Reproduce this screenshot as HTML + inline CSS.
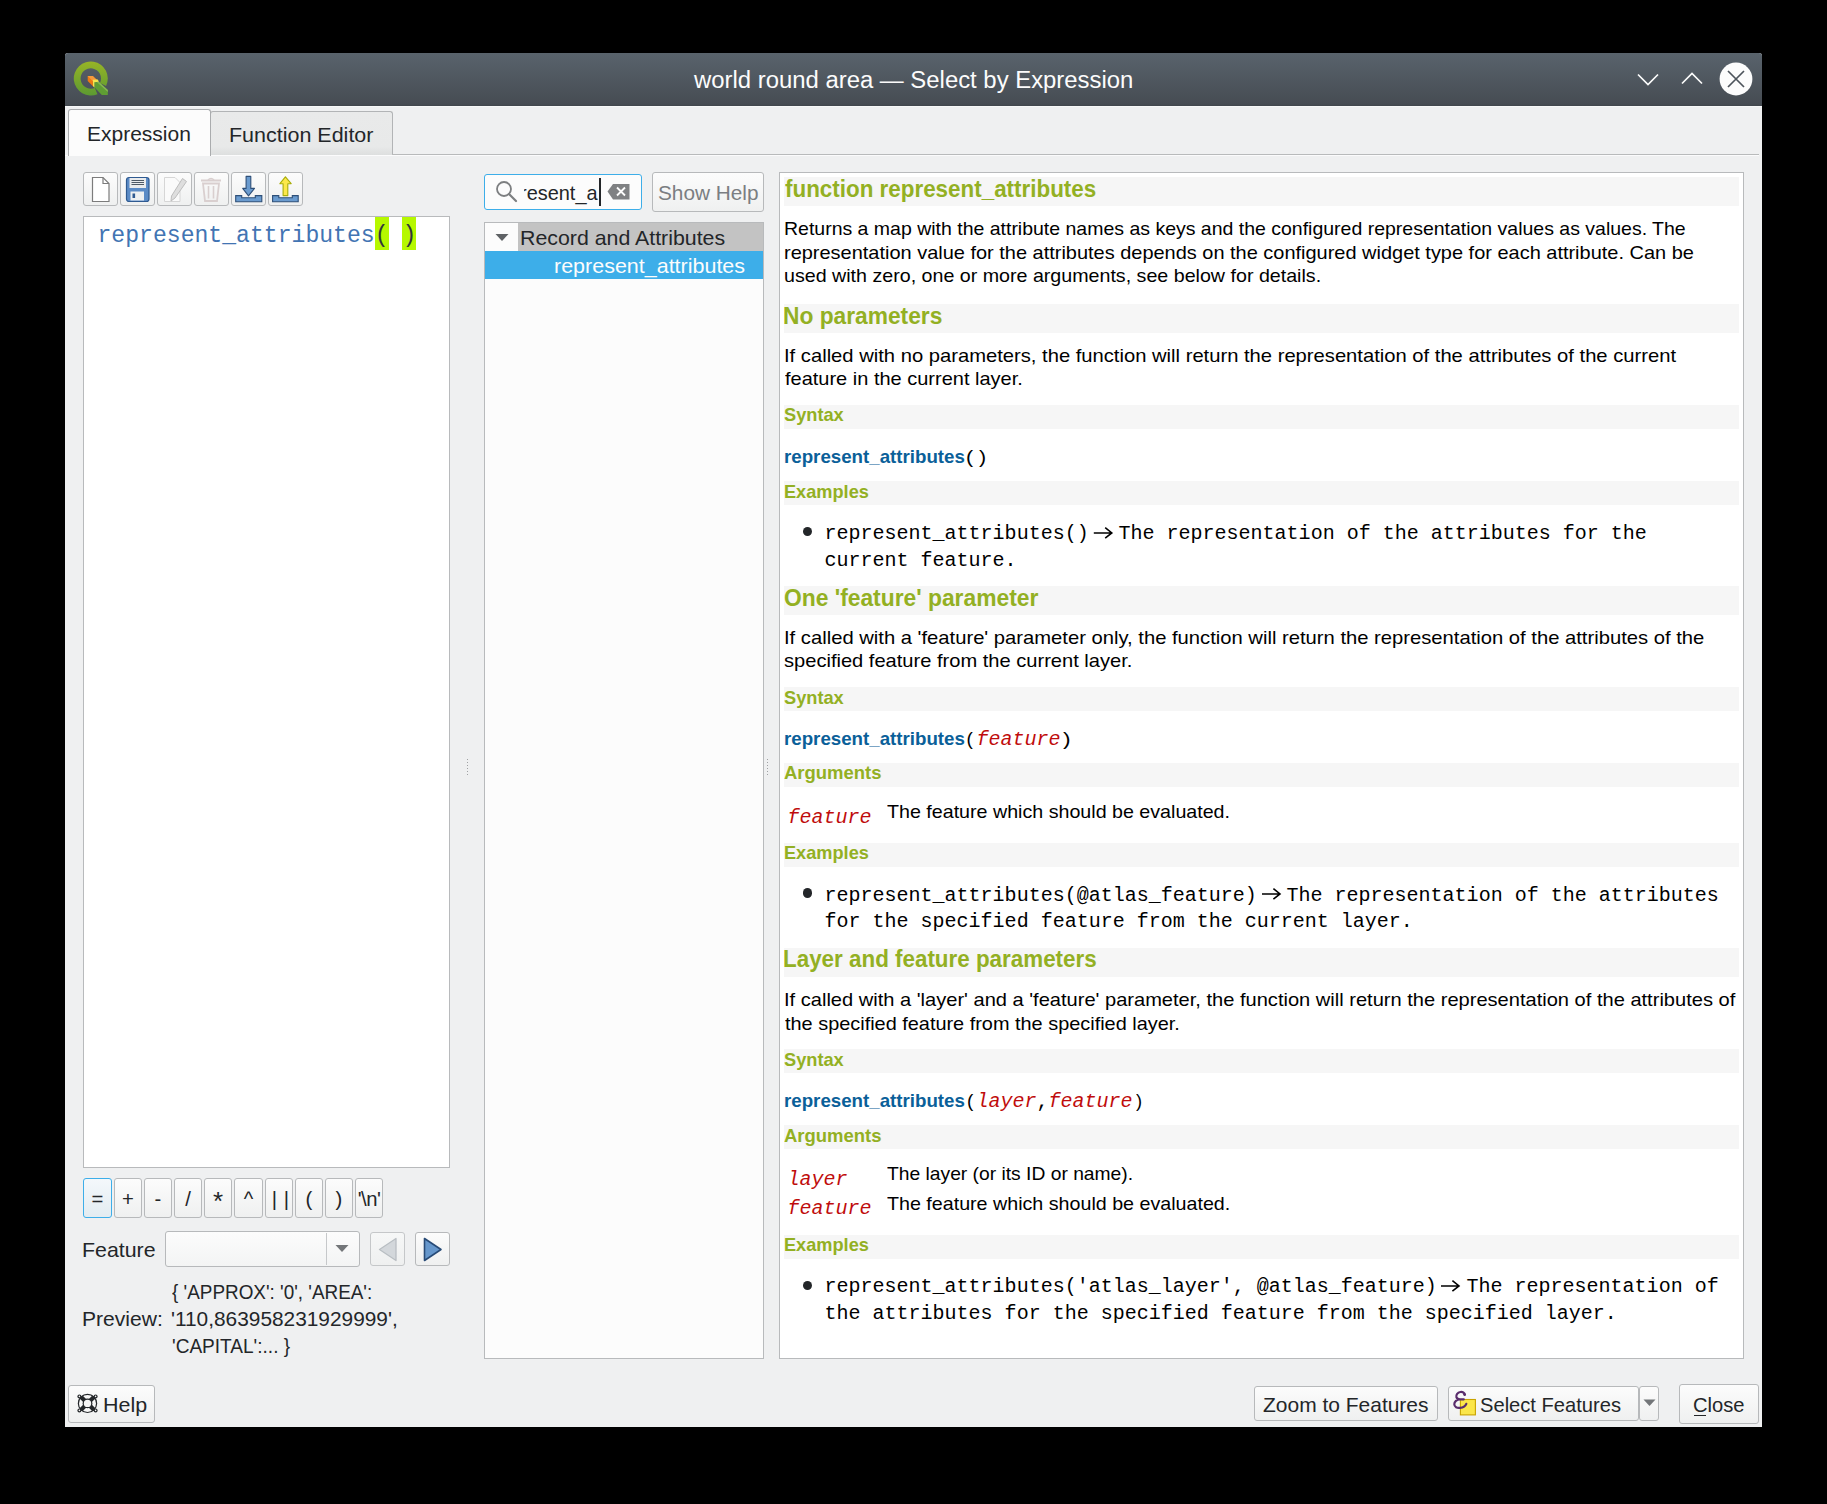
<!DOCTYPE html>
<html><head><meta charset="utf-8"><title>Select by Expression</title>
<style>
html,body{margin:0;padding:0;}
body{width:1827px;height:1504px;background:#000;position:relative;overflow:hidden;font-family:"Liberation Sans",sans-serif;}
.b{position:absolute;}
.t{position:absolute;white-space:nowrap;transform-origin:0 0;}
</style></head><body>
<div class="b" style="left:65px;top:53px;width:1697px;height:1374px;background:#eff0f1;border-radius:3px 3px 0 0;"></div>
<div class="b" style="left:65px;top:53px;width:1697px;height:53px;background:linear-gradient(#59636c,#464c53 96%,#40464c);border-radius:3px 3px 0 0;"></div>
<div class="b" style="left:65px;top:106px;width:1697px;height:1px;background:#f7f8f8;"></div>
<div class="b" style="left:210px;top:111px;width:183px;height:44px;background:linear-gradient(#e9eaea 0%,#e8e9e9 80%,#dddfdf 100%);border:1px solid #b2b4b6;border-bottom:none;border-radius:3px 3px 0 0;box-sizing:border-box;"></div>
<div class="b" style="left:392px;top:154px;width:1367px;height:1px;background:#b8babb;"></div>
<div class="b" style="left:65px;top:155px;width:1694px;height:1px;background:#fbfbfc;"></div>
<div class="b" style="left:68px;top:109px;width:143px;height:47px;background:#fcfcfc;border:1px solid #aaacae;border-bottom:none;border-radius:3px 3px 0 0;box-sizing:border-box;"></div>
<div class="b" style="left:83px;top:172px;width:35px;height:34px;border:1px solid #b7b9bb;border-radius:3px;background:linear-gradient(#fcfcfc,#eff0f0);box-sizing:border-box;"></div>
<div class="b" style="left:120px;top:172px;width:35px;height:34px;border:1px solid #b7b9bb;border-radius:3px;background:linear-gradient(#fcfcfc,#eff0f0);box-sizing:border-box;"></div>
<div class="b" style="left:157px;top:172px;width:35px;height:34px;border:1px solid #b7b9bb;border-radius:3px;background:linear-gradient(#fcfcfc,#eff0f0);box-sizing:border-box;"></div>
<div class="b" style="left:194px;top:172px;width:35px;height:34px;border:1px solid #b7b9bb;border-radius:3px;background:linear-gradient(#fcfcfc,#eff0f0);box-sizing:border-box;"></div>
<div class="b" style="left:231px;top:172px;width:35px;height:34px;border:1px solid #b7b9bb;border-radius:3px;background:linear-gradient(#fcfcfc,#eff0f0);box-sizing:border-box;"></div>
<div class="b" style="left:268px;top:172px;width:35px;height:34px;border:1px solid #b7b9bb;border-radius:3px;background:linear-gradient(#fcfcfc,#eff0f0);box-sizing:border-box;"></div>
<div class="b" style="left:83px;top:216px;width:367px;height:952px;background:#fff;border:1px solid #b8babc;box-sizing:border-box;"></div>
<div class="b" style="left:375px;top:217px;width:14px;height:33px;background:#b6f800;"></div>
<div class="b" style="left:402px;top:217px;width:14px;height:33px;background:#b6f800;"></div>
<div class="t" style="left:97.5px;top:225.2px;font-family:'Liberation Mono', monospace;font-size:23.1px;line-height:23.1px;color:#4274b3">represent_attributes<span style="color:#31363b">( )</span></div>
<div class="b" style="left:83px;top:1178px;width:29px;height:40px;border:1px solid #3daee9;border-radius:3px;background:linear-gradient(#f4f8fb,#e3ecf1);box-sizing:border-box;"></div>
<div class="t" style="left:83px;top:1189px;width:29px;text-align:center;font-family:'Liberation Sans', sans-serif;font-size:20.3px;line-height:20.3px;color:#232629;letter-spacing:0px;text-indent:0px">=</div>
<div class="b" style="left:114px;top:1178px;width:28px;height:40px;border:1px solid #b7b9bb;border-radius:3px;background:linear-gradient(#fcfcfc,#eff0f0);box-sizing:border-box;"></div>
<div class="t" style="left:114px;top:1189px;width:28px;text-align:center;font-family:'Liberation Sans', sans-serif;font-size:20.3px;line-height:20.3px;color:#232629;letter-spacing:0px;text-indent:0px">+</div>
<div class="b" style="left:144px;top:1178px;width:28px;height:40px;border:1px solid #b7b9bb;border-radius:3px;background:linear-gradient(#fcfcfc,#eff0f0);box-sizing:border-box;"></div>
<div class="t" style="left:144px;top:1189px;width:28px;text-align:center;font-family:'Liberation Sans', sans-serif;font-size:20.3px;line-height:20.3px;color:#232629;letter-spacing:0px;text-indent:0px">-</div>
<div class="b" style="left:174px;top:1178px;width:28px;height:40px;border:1px solid #b7b9bb;border-radius:3px;background:linear-gradient(#fcfcfc,#eff0f0);box-sizing:border-box;"></div>
<div class="t" style="left:174px;top:1189px;width:28px;text-align:center;font-family:'Liberation Sans', sans-serif;font-size:20.3px;line-height:20.3px;color:#232629;letter-spacing:0px;text-indent:0px">/</div>
<div class="b" style="left:204px;top:1178px;width:28px;height:40px;border:1px solid #b7b9bb;border-radius:3px;background:linear-gradient(#fcfcfc,#eff0f0);box-sizing:border-box;"></div>
<div class="t" style="left:204px;top:1191px;width:28px;text-align:center;font-family:'Liberation Sans', sans-serif;font-size:26px;line-height:20.3px;color:#232629;letter-spacing:0px;text-indent:0px">*</div>
<div class="b" style="left:234px;top:1178px;width:29px;height:40px;border:1px solid #b7b9bb;border-radius:3px;background:linear-gradient(#fcfcfc,#eff0f0);box-sizing:border-box;"></div>
<div class="t" style="left:234px;top:1189px;width:29px;text-align:center;font-family:'Liberation Sans', sans-serif;font-size:20.3px;line-height:20.3px;color:#232629;letter-spacing:0px;text-indent:0px">^</div>
<div class="b" style="left:265px;top:1178px;width:28px;height:40px;border:1px solid #b7b9bb;border-radius:3px;background:linear-gradient(#fcfcfc,#eff0f0);box-sizing:border-box;"></div>
<div class="t" style="left:265px;top:1189px;width:28px;text-align:center;font-family:'Liberation Sans', sans-serif;font-size:20.3px;line-height:20.3px;color:#232629;letter-spacing:6.7px;text-indent:6.7px">||</div>
<div class="b" style="left:295px;top:1178px;width:28px;height:40px;border:1px solid #b7b9bb;border-radius:3px;background:linear-gradient(#fcfcfc,#eff0f0);box-sizing:border-box;"></div>
<div class="t" style="left:295px;top:1189px;width:28px;text-align:center;font-family:'Liberation Sans', sans-serif;font-size:20.3px;line-height:20.3px;color:#232629;letter-spacing:0px;text-indent:0px">(</div>
<div class="b" style="left:325px;top:1178px;width:28px;height:40px;border:1px solid #b7b9bb;border-radius:3px;background:linear-gradient(#fcfcfc,#eff0f0);box-sizing:border-box;"></div>
<div class="t" style="left:325px;top:1189px;width:28px;text-align:center;font-family:'Liberation Sans', sans-serif;font-size:20.3px;line-height:20.3px;color:#232629;letter-spacing:0px;text-indent:0px">)</div>
<div class="b" style="left:355px;top:1178px;width:28px;height:40px;border:1px solid #b7b9bb;border-radius:3px;background:linear-gradient(#fcfcfc,#eff0f0);box-sizing:border-box;"></div>
<div class="t" style="left:355px;top:1189px;width:28px;text-align:center;font-family:'Liberation Sans', sans-serif;font-size:20.3px;line-height:20.3px;color:#232629;letter-spacing:-0.5px;text-indent:0px">&#x27;\n&#x27;</div>
<div class="b" style="left:467px;top:759px;width:1px;height:17px;background:repeating-linear-gradient(#9fa1a3 0 1px, transparent 1px 3px)"></div>
<div class="b" style="left:767px;top:759px;width:1px;height:17px;background:repeating-linear-gradient(#9fa1a3 0 1px, transparent 1px 3px)"></div>
<div class="b" style="left:165px;top:1231px;width:195px;height:36px;border:1px solid #b7b9bb;border-radius:3px;background:linear-gradient(#fcfcfc,#eff0f0);box-sizing:border-box;background:linear-gradient(#fcfcfc,#f3f4f4);"></div>
<div class="b" style="left:326px;top:1233px;width:1px;height:32px;background:#c6c8ca;"></div>
<svg class="b" style="left:335px;top:1244px;" width="14" height="9" viewBox="0 0 14 9"><path d="M0.5 1 L13.5 1 L7 8 Z" fill="#737679"/></svg>
<div class="b" style="left:370px;top:1232px;width:35px;height:34px;border:1px solid #c5c7c9;border-radius:3px;background:linear-gradient(#f6f7f7,#eff0f0);box-sizing:border-box;"></div>
<svg class="b" style="left:377px;top:1236px;" width="22" height="26" viewBox="0 0 22 26"><path d="M19 2.5 L19 24.5 L2.5 13.5 Z" fill="#d3d7db" stroke="#b9bec3" stroke-width="1.3" stroke-linejoin="round"/></svg>
<div class="b" style="left:415px;top:1232px;width:35px;height:34px;border:1px solid #b7b9bb;border-radius:3px;background:linear-gradient(#fcfcfc,#eff0f0);box-sizing:border-box;"></div>
<svg class="b" style="left:421px;top:1236px;" width="22" height="26" viewBox="0 0 22 26"><path d="M3.5 2.5 L3.5 24.5 L20 13.5 Z" fill="#6697cc" stroke="#284b77" stroke-width="1.6" stroke-linejoin="round"/></svg>
<div class="b" style="left:68px;top:1385px;width:87px;height:38px;border:1px solid #b7b9bb;border-radius:3px;background:linear-gradient(#fcfcfc,#eff0f0);box-sizing:border-box;"></div>
<svg class="b" style="left:76px;top:1392px;" width="24" height="23" viewBox="0 0 24 23"><g transform="translate(11.5,11.4)">
<circle r="9.7" fill="#232629"/><circle r="8.5" fill="#f7f7f7"/><circle r="4.9" fill="#232629"/>
<g stroke="#232629" stroke-width="4.2"><line x1="-6.4" y1="-6.4" x2="6.4" y2="6.4"/><line x1="6.4" y1="-6.4" x2="-6.4" y2="6.4"/></g>
<circle r="3.7" fill="#f5f5f5"/>
<g fill="#232629"><circle cx="-8.1" cy="-7" r="2"/><circle cx="8.1" cy="-7" r="2"/><circle cx="-8.1" cy="7" r="2"/><circle cx="8.1" cy="7" r="2"/></g>
<g fill="#f7f7f7"><circle cx="-8.1" cy="-7" r="0.8"/><circle cx="8.1" cy="-7" r="0.8"/><circle cx="-8.1" cy="7" r="0.8"/><circle cx="8.1" cy="7" r="0.8"/></g></g></svg>
<div class="b" style="left:484px;top:174px;width:158px;height:36px;background:#fcfcfc;border:1px solid #3daee9;border-radius:3px;box-sizing:border-box;"></div>
<svg class="b" style="left:494px;top:179px;" width="26" height="26" viewBox="0 0 26 26"><circle cx="10" cy="10" r="7" fill="none" stroke="#7d7f81" stroke-width="1.8"/><line x1="15" y1="15" x2="22" y2="22" stroke="#7d7f81" stroke-width="2.2" stroke-linecap="round"/></svg>
<div class="b" style="left:524px;top:176px;width:75px;height:32px;overflow:hidden"><div class="t" style="left:-3.8px;top:6.9px;font-family:'Liberation Sans', sans-serif;font-size:20.3px;line-height:20.3px;color:#232629;transform:scaleX(0.983)">resent_a</div></div>
<div class="b" style="left:599px;top:178px;width:1.5px;height:28px;background:#232629;"></div>
<svg class="b" style="left:606px;top:182px;" width="25" height="19" viewBox="0 0 25 19"><path d="M1.5 9.5 L7 2 L23.5 2 L23.5 17.5 L7 17.5 Z" fill="#7f8183"/><path d="M11 5.5 L19 13.5 M19 5.5 L11 13.5" stroke="#fcfcfc" stroke-width="1.8"/></svg>
<div class="b" style="left:652px;top:172px;width:112px;height:40px;border:1px solid #b7b9bb;border-radius:3px;background:linear-gradient(#fcfcfc,#eff0f0);box-sizing:border-box;"></div>
<div class="b" style="left:484px;top:222px;width:280px;height:1137px;background:#fcfcfc;border:1px solid #b8babc;box-sizing:border-box;"></div>
<div class="b" style="left:518px;top:223px;width:245px;height:28px;background:#c3c3c3;"></div>
<svg class="b" style="left:495px;top:233px;" width="14" height="9" viewBox="0 0 14 9"><path d="M0.5 1 L13.5 1 L7 8 Z" fill="#5f6265"/></svg>
<div class="b" style="left:485px;top:251px;width:278px;height:28px;background:#3daee9;"></div>
<div class="b" style="left:779px;top:172px;width:965px;height:1187px;background:#fff;border:1px solid #b8babc;box-sizing:border-box;"></div>
<div class="b" style="left:784px;top:177px;width:955px;height:29px;background:#f6f6f6;"></div>
<div class="b" style="left:784px;top:304px;width:955px;height:29px;background:#f6f6f6;"></div>
<div class="b" style="left:784px;top:586px;width:955px;height:29px;background:#f6f6f6;"></div>
<div class="b" style="left:784px;top:948px;width:955px;height:29px;background:#f6f6f6;"></div>
<div class="b" style="left:784px;top:405px;width:955px;height:24px;background:#f6f6f6;"></div>
<div class="b" style="left:784px;top:481px;width:955px;height:24px;background:#f6f6f6;"></div>
<div class="b" style="left:784px;top:687px;width:955px;height:24px;background:#f6f6f6;"></div>
<div class="b" style="left:784px;top:763px;width:955px;height:24px;background:#f6f6f6;"></div>
<div class="b" style="left:784px;top:843px;width:955px;height:24px;background:#f6f6f6;"></div>
<div class="b" style="left:784px;top:1049px;width:955px;height:24px;background:#f6f6f6;"></div>
<div class="b" style="left:784px;top:1125px;width:955px;height:24px;background:#f6f6f6;"></div>
<div class="b" style="left:784px;top:1235px;width:955px;height:24px;background:#f6f6f6;"></div>
<div class="b" style="left:803.2px;top:527.0px;width:9.2px;height:9.2px;border-radius:50%;background:#232629"></div>
<div class="b" style="left:803.2px;top:888.4px;width:9.2px;height:9.2px;border-radius:50%;background:#232629"></div>
<div class="b" style="left:803.2px;top:1280.9px;width:9.2px;height:9.2px;border-radius:50%;background:#232629"></div>
<svg class="b" style="left:1093px;top:526px;" width="22" height="14" viewBox="0 0 22 14"><path d="M0.8 7 L18.8 7 M12.2 1.6 L18.8 7 L12.2 12.2" fill="none" stroke="#000" stroke-width="1.6"/></svg>
<svg class="b" style="left:1261px;top:887px;" width="22" height="14" viewBox="0 0 22 14"><path d="M1.0 7 L19.0 7 M12.4 1.6 L19.0 7 L12.4 12.2" fill="none" stroke="#000" stroke-width="1.6"/></svg>
<svg class="b" style="left:1440px;top:1279px;" width="22" height="14" viewBox="0 0 22 14"><path d="M1.0 7 L19.0 7 M12.4 1.6 L19.0 7 L12.4 12.2" fill="none" stroke="#000" stroke-width="1.6"/></svg>
<div class="b" style="left:1254px;top:1386px;width:184px;height:35px;border:1px solid #b7b9bb;border-radius:3px;background:linear-gradient(#fcfcfc,#eff0f0);box-sizing:border-box;"></div>
<div class="b" style="left:1448px;top:1386px;width:191px;height:35px;border:1px solid #b7b9bb;border-radius:3px;background:linear-gradient(#fcfcfc,#eff0f0);box-sizing:border-box;"></div>
<div class="b" style="left:1639px;top:1386px;width:20px;height:35px;border:1px solid #b7b9bb;border-radius:3px;background:linear-gradient(#fcfcfc,#eff0f0);box-sizing:border-box;"></div>
<svg class="b" style="left:1643px;top:1399px;" width="13" height="8" viewBox="0 0 13 8"><path d="M0.5 0.5 L12.5 0.5 L6.5 7 Z" fill="#737679"/></svg>
<div class="b" style="left:1679px;top:1384px;width:80px;height:40px;border:1px solid #b7b9bb;border-radius:3px;background:linear-gradient(#fcfcfc,#eff0f0);box-sizing:border-box;"></div>
<div class="b" style="left:1694px;top:1415px;width:12px;height:1px;background:#232629;"></div>
<svg class="b" style="left:1450px;top:1386px;" width="30" height="32" viewBox="0 0 30 32"><rect x="10.4" y="13.5" width="15" height="15.4" fill="#fbe64a" stroke="#c9a300" stroke-width="1.1"/><path d="M14.8 8.6 C14.5 6.8 12.6 5.6 10.4 6 C7.6 6.5 5.8 9 6.4 11.2 C6.9 12.8 8.4 13.3 10 13.3 L13.8 13.3 M10 13.3 C6.8 13.4 4.2 15.6 4.3 18.3 C4.4 21 7 22.2 10 21.8 C13.2 21.4 15.6 19.6 16.3 17.8" fill="none" stroke="#5a2d6c" stroke-width="2.2" stroke-linecap="round"/><circle cx="14.6" cy="8.6" r="1.4" fill="#5a2d6c"/></svg>
<svg class="b" style="left:72px;top:59px;" width="38" height="38" viewBox="0 0 38 38"><defs><linearGradient id="lg" x1="0" y1="0" x2="0" y2="1"><stop offset="0" stop-color="#97b426"/><stop offset="1" stop-color="#5c9a31"/></linearGradient></defs>
<g transform="translate(0,2)"><path d="M25.49 33.13 A17 17 0 1 1 34.08 24.95 L27.97 21.97 A10.2 10.2 0 1 0 22.82 26.88 Z" fill="url(#lg)"/>
<path d="M22.4 21.2 L26.8 20.7 L35.8 29 L35.8 34 L29.8 34 L22.4 26.3 Z" fill="#5f9d33"/>
<path d="M26.8 20.7 L35.8 29 L35.8 31 L25 21.3 Z" fill="#86b552"/>
<path d="M15.7 15.1 L20.8 15.1 L25.8 19.7 L20.9 20.2 L21 25.3 L15.7 20.1 Z" fill="#ee7a12"/>
<path d="M15.7 15.1 L20.8 15.1 L25.8 19.7 L20.9 20.2 Z" fill="#f59a3c"/>
<path d="M20.9 18.7 L25.8 18.5 L26.9 20.7 L22.4 21.2 L22.4 26.6 L21 25.3 Z" fill="#f4e84e"/></g></svg>
<svg class="b" style="left:1636px;top:72px;" width="24" height="16" viewBox="0 0 24 16"><path d="M2 2.5 L12 12.5 L22 2.5" fill="none" stroke="#fcfcfc" stroke-width="1.7"/></svg>
<svg class="b" style="left:1680px;top:70px;" width="24" height="16" viewBox="0 0 24 16"><path d="M2 13.5 L12 3.5 L22 13.5" fill="none" stroke="#fcfcfc" stroke-width="1.7"/></svg>
<svg class="b" style="left:1718px;top:61px;" width="36" height="36" viewBox="0 0 36 36"><circle cx="18" cy="18" r="16.4" fill="#fcfcfc"/><path d="M10 10 L26 26 M26 10 L10 26" stroke="#4d545b" stroke-width="1.7"/></svg>
<svg class="b" style="left:88px;top:175px;" width="24" height="28" viewBox="0 0 24 28"><path d="M4.5 2.5 L15 2.5 L21 8.5 L21 26.5 L4.5 26.5 Z" fill="#fff" stroke="#7c7c7c" stroke-width="1.2"/><path d="M15 2.5 L15 8.5 L21 8.5" fill="none" stroke="#7c7c7c" stroke-width="1.2"/></svg>
<svg class="b" style="left:125px;top:176px;" width="26" height="27" viewBox="0 0 26 27"><rect x="1.5" y="1.5" width="22.5" height="24" rx="2.5" fill="#5b8bc6" stroke="#2f5a91" stroke-width="1.2"/><rect x="4.5" y="2" width="16.5" height="10" fill="#e9ebed"/><g stroke="#4f5a66" stroke-width="1"><line x1="6.5" y1="4.5" x2="19" y2="4.5"/><line x1="6.5" y1="6.5" x2="19" y2="6.5"/><line x1="6.5" y1="8.5" x2="19" y2="8.5"/></g><rect x="5.5" y="15.5" width="13.5" height="9" fill="#eef0f2"/><rect x="7.5" y="17.5" width="2.6" height="4.5" fill="#2f5a91"/></svg>
<svg class="b" style="left:160px;top:175px;" width="28" height="29" viewBox="0 0 28 29"><path d="M4.5 2.5 L15 2.5 L20 7.5 L20 26.5 L4.5 26.5 Z" fill="#fafafa" stroke="#d6d6d6" stroke-width="1"/><path d="M22.5 3.5 L26.5 6.5 L15 23 L11 26 L11.5 21 Z" fill="#dedede" stroke="#bdbdbd" stroke-width="1"/></svg>
<svg class="b" style="left:198px;top:176px;" width="26" height="27" viewBox="0 0 26 27"><path d="M3 4.5 L23 4.5" stroke="#d9cfcf" stroke-width="2"/><path d="M10 4 Q13 1 16 4" fill="none" stroke="#d9cfcf" stroke-width="1.6"/><path d="M5 7.5 L21 7.5 L19 25 L7 25 Z" fill="none" stroke="#d9cfcf" stroke-width="1.8"/><g stroke="#d9cfcf" stroke-width="1.6"><line x1="10.5" y1="10" x2="10.5" y2="22.5"/><line x1="15.5" y1="10" x2="15.5" y2="22.5"/></g></svg>
<svg class="b" style="left:231px;top:172px;" width="35" height="34" viewBox="0 0 35 34"><path d="M15.1 4.4 L19.8 4.4 L19.8 16.4 L23.5 16.4 L17.5 23.8 L11.7 16.4 L15.1 16.4 Z" fill="#6a9bcf" stroke="#2e4f78" stroke-width="1.1" stroke-linejoin="round"/><path d="M4.7 23.6 L10.7 23.6 L10.7 25.8 L24.3 25.8 L24.3 23.6 L30.8 23.6 L30.8 29.8 L4.7 29.8 Z" fill="#6a9bcf" stroke="#2e4f78" stroke-width="1.1"/></svg>
<svg class="b" style="left:268px;top:172px;" width="35" height="34" viewBox="0 0 35 34"><path d="M17.4 4.8 L23.2 11.7 L19.8 11.7 L19.8 23.6 L15.1 23.6 L15.1 11.7 L11.9 11.7 Z" fill="#fce84a" stroke="#a9ad0a" stroke-width="1.1" stroke-linejoin="round"/><path d="M4.6 23.6 L10.8 23.6 L10.8 25.8 L24.3 25.8 L24.3 23.6 L30.2 23.6 L30.2 29.8 L4.6 29.8 Z" fill="#6a9bcf" stroke="#2e4f78" stroke-width="1.1"/></svg>
<div class="t" style="left:694.00px;top:68.70px;font-family:'Liberation Sans', sans-serif;font-size:23.5px;line-height:23.5px;font-weight:400;font-style:normal;color:#fcfcfc;transform:scaleX(1.0162);">world round area — Select by Expression</div>
<div class="t" style="left:86.53px;top:124.40px;font-family:'Liberation Sans', sans-serif;font-size:20.3px;line-height:20.3px;font-weight:400;font-style:normal;color:#232629;transform:scaleX(1.0351);">Expression</div>
<div class="t" style="left:229.28px;top:124.60px;font-family:'Liberation Sans', sans-serif;font-size:20.3px;line-height:20.3px;font-weight:400;font-style:normal;color:#232629;transform:scaleX(1.0590);">Function Editor</div>
<div class="t" style="left:657.58px;top:182.80px;font-family:'Liberation Sans', sans-serif;font-size:20.3px;line-height:20.3px;font-weight:400;font-style:normal;color:#7b7e82;transform:scaleX(1.0250);">Show Help</div>
<div class="t" style="left:519.90px;top:227.60px;font-family:'Liberation Sans', sans-serif;font-size:20.3px;line-height:20.3px;font-weight:400;font-style:normal;color:#232629;transform:scaleX(1.0518);">Record and Attributes</div>
<div class="t" style="left:554.14px;top:255.60px;font-family:'Liberation Sans', sans-serif;font-size:20.3px;line-height:20.3px;font-weight:400;font-style:normal;color:#fcfcfc;transform:scaleX(1.0592);">represent_attributes</div>
<div class="t" style="left:82.20px;top:1240.10px;font-family:'Liberation Sans', sans-serif;font-size:20.3px;line-height:20.3px;font-weight:400;font-style:normal;color:#232629;transform:scaleX(1.0522);">Feature</div>
<div class="t" style="left:82.22px;top:1308.90px;font-family:'Liberation Sans', sans-serif;font-size:20.3px;line-height:20.3px;font-weight:400;font-style:normal;color:#232629;transform:scaleX(1.0392);">Preview:</div>
<div class="t" style="left:172.10px;top:1281.80px;font-family:'Liberation Sans', sans-serif;font-size:20.3px;line-height:20.3px;font-weight:400;font-style:normal;color:#232629;transform:scaleX(0.9319);">{ &#x27;APPROX&#x27;: &#x27;0&#x27;, &#x27;AREA&#x27;:</div>
<div class="t" style="left:171.07px;top:1309.00px;font-family:'Liberation Sans', sans-serif;font-size:20.3px;line-height:20.3px;font-weight:400;font-style:normal;color:#232629;transform:scaleX(1.0280);">&#x27;110,863958231929999&#x27;,</div>
<div class="t" style="left:172.16px;top:1335.80px;font-family:'Liberation Sans', sans-serif;font-size:20.3px;line-height:20.3px;font-weight:400;font-style:normal;color:#232629;transform:scaleX(0.9392);">&#x27;CAPITAL&#x27;:... }</div>
<div class="t" style="left:103.18px;top:1394.70px;font-family:'Liberation Sans', sans-serif;font-size:20.3px;line-height:20.3px;font-weight:400;font-style:normal;color:#232629;transform:scaleX(1.0590);">Help</div>
<div class="t" style="left:1263.37px;top:1395.00px;font-family:'Liberation Sans', sans-serif;font-size:20.3px;line-height:20.3px;font-weight:400;font-style:normal;color:#232629;transform:scaleX(1.0340);">Zoom to Features</div>
<div class="t" style="left:1479.61px;top:1394.50px;font-family:'Liberation Sans', sans-serif;font-size:20.3px;line-height:20.3px;font-weight:400;font-style:normal;color:#232629;transform:scaleX(0.9929);">Select Features</div>
<div class="t" style="left:1692.81px;top:1394.50px;font-family:'Liberation Sans', sans-serif;font-size:20.3px;line-height:20.3px;font-weight:400;font-style:normal;color:#232629;transform:scaleX(0.9940);">Close</div>
<div class="t" style="left:784.60px;top:176.70px;font-family:'Liberation Sans', sans-serif;font-size:23.8px;line-height:23.8px;font-weight:700;font-style:normal;color:#93b023;transform:scaleX(0.9415);">function represent_attributes</div>
<div class="t" style="left:783.57px;top:219.00px;font-family:'Liberation Sans', sans-serif;font-size:19px;line-height:19px;font-weight:400;font-style:normal;color:#000;transform:scaleX(1.0253);">Returns a map with the attribute names as keys and the configured representation values as values. The</div>
<div class="t" style="left:783.55px;top:242.50px;font-family:'Liberation Sans', sans-serif;font-size:19px;line-height:19px;font-weight:400;font-style:normal;color:#000;transform:scaleX(1.0505);">representation value for the attributes depends on the configured widget type for each attribute. Can be</div>
<div class="t" style="left:783.57px;top:266.00px;font-family:'Liberation Sans', sans-serif;font-size:19px;line-height:19px;font-weight:400;font-style:normal;color:#000;transform:scaleX(1.0337);">used with zero, one or more arguments, see below for details.</div>
<div class="t" style="left:782.99px;top:303.70px;font-family:'Liberation Sans', sans-serif;font-size:23.8px;line-height:23.8px;font-weight:700;font-style:normal;color:#93b023;transform:scaleX(0.9561);">No parameters</div>
<div class="t" style="left:784.38px;top:345.50px;font-family:'Liberation Sans', sans-serif;font-size:19px;line-height:19px;font-weight:400;font-style:normal;color:#000;transform:scaleX(1.0624);">If called with no parameters, the function will return the representation of the attributes of the current</div>
<div class="t" style="left:784.60px;top:369.30px;font-family:'Liberation Sans', sans-serif;font-size:19px;line-height:19px;font-weight:400;font-style:normal;color:#000;transform:scaleX(1.0520);">feature in the current layer.</div>
<div class="t" style="left:783.64px;top:405.40px;font-family:'Liberation Sans', sans-serif;font-size:19px;line-height:19px;font-weight:700;font-style:normal;color:#93b023;transform:scaleX(0.9590);">Syntax</div>
<div class="t" style="left:783.62px;top:446.50px;font-family:'Liberation Sans', sans-serif;font-size:19px;line-height:19px;font-weight:700;font-style:normal;color:#0a6099;transform:scaleX(0.9846);">represent_attributes</div>
<div class="t" style="left:965.88px;top:446.50px;font-family:'Liberation Sans', sans-serif;font-size:19px;line-height:19px;font-weight:400;font-style:normal;color:#000;transform:scaleX(1.1250);">( )</div>
<div class="t" style="left:783.64px;top:482.00px;font-family:'Liberation Sans', sans-serif;font-size:19px;line-height:19px;font-weight:700;font-style:normal;color:#93b023;transform:scaleX(0.9563);">Examples</div>
<div class="t" style="left:783.64px;top:585.50px;font-family:'Liberation Sans', sans-serif;font-size:23.8px;line-height:23.8px;font-weight:700;font-style:normal;color:#93b023;transform:scaleX(0.9587);">One &#x27;feature&#x27; parameter</div>
<div class="t" style="left:784.37px;top:627.60px;font-family:'Liberation Sans', sans-serif;font-size:19px;line-height:19px;font-weight:400;font-style:normal;color:#000;transform:scaleX(1.0632);">If called with a &#x27;feature&#x27; parameter only, the function will return the representation of the attributes of the</div>
<div class="t" style="left:783.54px;top:651.40px;font-family:'Liberation Sans', sans-serif;font-size:19px;line-height:19px;font-weight:400;font-style:normal;color:#000;transform:scaleX(1.0572);">specified feature from the current layer.</div>
<div class="t" style="left:783.64px;top:687.50px;font-family:'Liberation Sans', sans-serif;font-size:19px;line-height:19px;font-weight:700;font-style:normal;color:#93b023;transform:scaleX(0.9590);">Syntax</div>
<div class="t" style="left:783.62px;top:728.50px;font-family:'Liberation Sans', sans-serif;font-size:19px;line-height:19px;font-weight:700;font-style:normal;color:#0a6099;transform:scaleX(0.9846);">represent_attributes</div>
<div class="t" style="left:966.50px;top:728.50px;font-family:'Liberation Sans', sans-serif;font-size:19px;line-height:19px;font-weight:400;font-style:normal;color:#000;">(</div>
<div class="t" style="left:1062.50px;top:728.50px;font-family:'Liberation Sans', sans-serif;font-size:19px;line-height:19px;font-weight:400;font-style:normal;color:#000;transform:scaleX(1.2000);">)</div>
<div class="t" style="left:783.63px;top:763.00px;font-family:'Liberation Sans', sans-serif;font-size:19px;line-height:19px;font-weight:700;font-style:normal;color:#93b023;transform:scaleX(0.9727);">Arguments</div>
<div class="t" style="left:886.70px;top:801.60px;font-family:'Liberation Sans', sans-serif;font-size:19px;line-height:19px;font-weight:400;font-style:normal;color:#000;transform:scaleX(1.0342);">The feature which should be evaluated.</div>
<div class="t" style="left:783.64px;top:842.60px;font-family:'Liberation Sans', sans-serif;font-size:19px;line-height:19px;font-weight:700;font-style:normal;color:#93b023;transform:scaleX(0.9563);">Examples</div>
<div class="t" style="left:782.72px;top:947.10px;font-family:'Liberation Sans', sans-serif;font-size:23.8px;line-height:23.8px;font-weight:700;font-style:normal;color:#93b023;transform:scaleX(0.9412);">Layer and feature parameters</div>
<div class="t" style="left:784.39px;top:989.70px;font-family:'Liberation Sans', sans-serif;font-size:19px;line-height:19px;font-weight:400;font-style:normal;color:#000;transform:scaleX(1.0562);">If called with a &#x27;layer&#x27; and a &#x27;feature&#x27; parameter, the function will return the representation of the attributes of</div>
<div class="t" style="left:784.60px;top:1013.50px;font-family:'Liberation Sans', sans-serif;font-size:19px;line-height:19px;font-weight:400;font-style:normal;color:#000;transform:scaleX(1.0471);">the specified feature from the specified layer.</div>
<div class="t" style="left:783.64px;top:1049.60px;font-family:'Liberation Sans', sans-serif;font-size:19px;line-height:19px;font-weight:700;font-style:normal;color:#93b023;transform:scaleX(0.9590);">Syntax</div>
<div class="t" style="left:783.62px;top:1090.70px;font-family:'Liberation Sans', sans-serif;font-size:19px;line-height:19px;font-weight:700;font-style:normal;color:#0a6099;transform:scaleX(0.9846);">represent_attributes</div>
<div class="t" style="left:967.00px;top:1090.70px;font-family:'Liberation Sans', sans-serif;font-size:19px;line-height:19px;font-weight:400;font-style:normal;color:#000;">(</div>
<div class="t" style="left:1135.70px;top:1090.70px;font-family:'Liberation Sans', sans-serif;font-size:19px;line-height:19px;font-weight:400;font-style:normal;color:#000;transform:scaleX(0.9600);">)</div>
<div class="t" style="left:783.63px;top:1125.50px;font-family:'Liberation Sans', sans-serif;font-size:19px;line-height:19px;font-weight:700;font-style:normal;color:#93b023;transform:scaleX(0.9727);">Arguments</div>
<div class="t" style="left:886.70px;top:1163.60px;font-family:'Liberation Sans', sans-serif;font-size:19px;line-height:19px;font-weight:400;font-style:normal;color:#000;transform:scaleX(1.0133);">The layer (or its ID or name).</div>
<div class="t" style="left:886.70px;top:1193.90px;font-family:'Liberation Sans', sans-serif;font-size:19px;line-height:19px;font-weight:400;font-style:normal;color:#000;transform:scaleX(1.0348);">The feature which should be evaluated.</div>
<div class="t" style="left:783.64px;top:1235.00px;font-family:'Liberation Sans', sans-serif;font-size:19px;line-height:19px;font-weight:700;font-style:normal;color:#93b023;transform:scaleX(0.9563);">Examples</div>
<div class="t" style="left:824.60px;top:523.90px;font-family:'Liberation Mono', monospace;font-size:20px;line-height:20px;font-style:normal;color:#000">represent_attributes()</div>
<div class="t" style="left:1118.60px;top:523.90px;font-family:'Liberation Mono', monospace;font-size:20px;line-height:20px;font-style:normal;color:#000">The representation of the attributes for the</div>
<div class="t" style="left:824.60px;top:550.80px;font-family:'Liberation Mono', monospace;font-size:20px;line-height:20px;font-style:normal;color:#000">current feature.</div>
<div class="t" style="left:976.50px;top:729.50px;font-family:'Liberation Mono', monospace;font-size:20px;line-height:20px;font-style:italic;color:#bf0c0c">feature</div>
<div class="t" style="left:787.50px;top:807.50px;font-family:'Liberation Mono', monospace;font-size:20px;line-height:20px;font-style:italic;color:#bf0c0c">feature</div>
<div class="t" style="left:824.60px;top:885.50px;font-family:'Liberation Mono', monospace;font-size:20px;line-height:20px;font-style:normal;color:#000">represent_attributes(@atlas_feature)</div>
<div class="t" style="left:1286.60px;top:885.50px;font-family:'Liberation Mono', monospace;font-size:20px;line-height:20px;font-style:normal;color:#000">The representation of the attributes</div>
<div class="t" style="left:824.60px;top:912.00px;font-family:'Liberation Mono', monospace;font-size:20px;line-height:20px;font-style:normal;color:#000">for the specified feature from the current layer.</div>
<div class="t" style="left:976.50px;top:1091.70px;font-family:'Liberation Mono', monospace;font-size:20px;line-height:20px;font-style:italic;color:#bf0c0c">layer</div>
<div class="t" style="left:1036.50px;top:1091.70px;font-family:'Liberation Mono', monospace;font-size:20px;line-height:20px;font-style:normal;color:#000">,</div>
<div class="t" style="left:1048.50px;top:1091.70px;font-family:'Liberation Mono', monospace;font-size:20px;line-height:20px;font-style:italic;color:#bf0c0c">feature</div>
<div class="t" style="left:787.50px;top:1169.50px;font-family:'Liberation Mono', monospace;font-size:20px;line-height:20px;font-style:italic;color:#bf0c0c">layer</div>
<div class="t" style="left:787.50px;top:1199.00px;font-family:'Liberation Mono', monospace;font-size:20px;line-height:20px;font-style:italic;color:#bf0c0c">feature</div>
<div class="t" style="left:824.60px;top:1277.00px;font-family:'Liberation Mono', monospace;font-size:20px;line-height:20px;font-style:normal;color:#000">represent_attributes(&#x27;atlas_layer&#x27;, @atlas_feature)</div>
<div class="t" style="left:1466.60px;top:1277.00px;font-family:'Liberation Mono', monospace;font-size:20px;line-height:20px;font-style:normal;color:#000">The representation of</div>
<div class="t" style="left:824.60px;top:1304.10px;font-family:'Liberation Mono', monospace;font-size:20px;line-height:20px;font-style:normal;color:#000">the attributes for the specified feature from the specified layer.</div>
</body></html>
